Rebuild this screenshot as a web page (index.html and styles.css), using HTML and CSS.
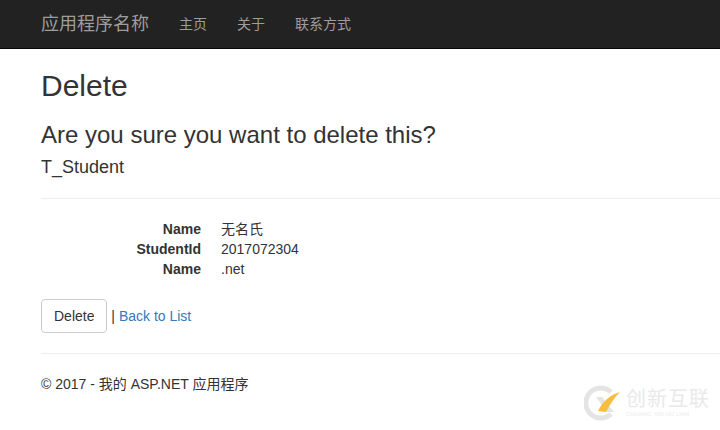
FILE: index.html
```html
<!DOCTYPE html>
<html lang="zh-CN">
<head>
    <meta charset="UTF-8">
    <title>Delete - 应用程序名称</title>
    <link rel="stylesheet" href="styles.css">
</head>
<body>
    <nav class="navbar">
        <a class="navbar-brand" href="#">应用程序名称</a>
        <ul class="navbar-nav">
            <li><a href="#">主页</a></li>
            <li><a href="#">关于</a></li>
            <li><a href="#">联系方式</a></li>
        </ul>
    </nav>

    <div class="container">
        <h2>Delete</h2>
        <h3>Are you sure you want to delete this?</h3>
        <h4>T_Student</h4>
        <hr>
        <dl class="details">
            <dt>Name</dt>
            <dd>无名氏</dd>
            <dt>StudentId</dt>
            <dd>2017072304</dd>
            <dt>Name</dt>
            <dd>.net</dd>
        </dl>
        <div class="actions">
            <button class="btn">Delete</button> | <a href="#">Back to List</a>
        </div>
        <hr class="footer-rule">
        <footer>© 2017 - 我的 ASP.NET 应用程序</footer>
    </div>

    <div class="watermark">
        <svg class="watermark-logo" viewBox="0 0 38 38" xmlns="http://www.w3.org/2000/svg">
            <path d="M27 8A15 15 0 1 0 27 30" fill="none" stroke="#e4e4e4" stroke-width="5"/>
            <path d="M12 13L18 13L30 28L23 28Z" fill="#e4e4e4"/>
            <path d="M14 27C19 17 26 11 36 8C31 13 26 20 22 28Z" fill="#f6bd3f"/>
        </svg>
        <div class="watermark-text">
            <span class="watermark-name">创新互联</span>
            <span class="watermark-pinyin">CHUANG XIN HU LIAN</span>
        </div>
    </div>
</body>
</html>
```

FILE: styles.css
```css
body {
    margin: 0;
    font-family: "Liberation Sans", "Noto Sans CJK SC", Arial, sans-serif;
    font-size: 14px;
    line-height: 20px;
    color: #333;
    background-color: #fff;
    overflow: hidden;
}
a {
    color: #337ab7;
    text-decoration: none;
}
.navbar {
    display: flex;
    height: 48px;
    padding-left: 41px;
    background-color: #222;
    border-bottom: 1px solid #080808;
}
.navbar-brand {
    padding: 14px 15px 14px 0;
    font-size: 18px;
    color: #9d9d9d;
}
.navbar-nav {
    display: flex;
    margin: 0;
    padding: 0;
    list-style: none;
}
.navbar-nav a {
    display: block;
    padding: 14px 15px;
    color: #9d9d9d;
}
.container {
    padding-left: 41px;
}
h2, h3, h4 {
    font-weight: 500;
    line-height: 1.1;
    margin: 0;
}
h2 {
    font-size: 30px;
    padding-top: 20px;
    margin-bottom: 10px;
}
h3 {
    font-size: 24px;
    padding-top: 10px;
    margin-bottom: 10px;
}
h4 {
    font-size: 18px;
    margin-bottom: 10px;
}
hr {
    margin: 20px 0;
    border: 0;
    border-top: 1px solid #eee;
}
.details {
    display: grid;
    grid-template-columns: 160px 1fr;
    column-gap: 20px;
    margin: 0 0 20px;
}
.details dt {
    font-weight: bold;
    text-align: right;
}
.details dd {
    margin: 0;
}
.btn {
    height: 34px;
    padding: 6px 12px;
    font-family: inherit;
    font-size: 14px;
    line-height: 20px;
    color: #333;
    background-color: #fff;
    border: 1px solid #ccc;
    border-radius: 4px;
}
.footer-rule {
    margin-bottom: 20px;
}
footer {
    margin-top: 0;
}
/* site watermark in the bottom right corner */
.watermark {
    position: absolute;
    left: 584px;
    top: 384px;
    display: flex;
    align-items: center;
    gap: 4px;
}
.watermark-logo {
    width: 38px;
    height: 38px;
}
.watermark-text {
    display: flex;
    flex-direction: column;
}
.watermark-name {
    font-size: 20px;
    line-height: 22px;
    letter-spacing: 1px;
    color: #e9e9e9;
}
.watermark-pinyin {
    font-size: 6px;
    line-height: 8px;
    color: #ececec;
    white-space: nowrap;
}
```
